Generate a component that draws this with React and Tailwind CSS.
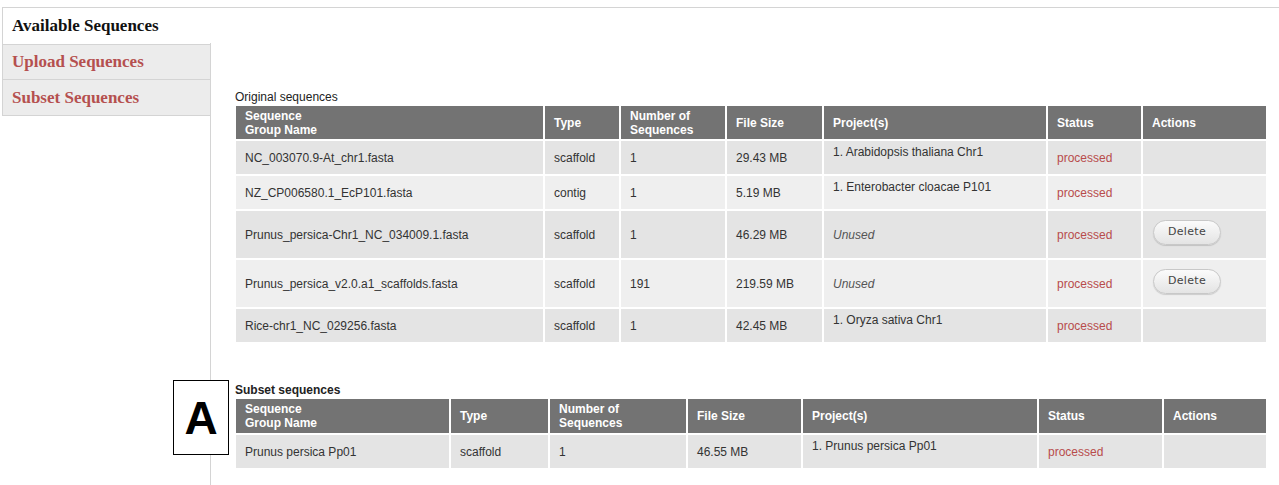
import React from "react";

const font = { fontFamily: '"Liberation Sans", Arial, sans-serif' };

function Th({ children }) {
  return (
    <th className="border-2 border-white bg-[#737373] text-white text-left font-bold text-[12px] leading-[14px] px-[9px] py-0 align-middle">
      {children}
    </th>
  );
}

function Td({ children, className = "" }) {
  return (
    <td className={"border-2 border-white px-[9px] py-0 text-[12px] leading-[14px] text-[#333] " + className}>
      {children}
    </td>
  );
}

function DeleteBtn() {
  return (
    <button className="mt-[-16px] h-[25px] w-[68px] rounded-full border border-[#c8c8c8] bg-gradient-to-b from-[#fbfbfb] to-[#e4e4e4] text-[11px] text-[#444] shadow-[0_1px_1px_rgba(0,0,0,0.15)]" style={{ fontFamily: '"DejaVu Sans", Verdana, sans-serif', letterSpacing: "0.3px" }}>
      Delete
    </button>
  );
}

const rows1 = [
  { name: "NC_003070.9-At_chr1.fasta", type: "scaffold", n: "1", size: "29.43 MB", proj: "1. Arabidopsis thaliana Chr1", h: "h-[35px]", bg: "bg-[#e4e4e4]" },
  { name: "NZ_CP006580.1_EcP101.fasta", type: "contig", n: "1", size: "5.19 MB", proj: "1. Enterobacter cloacae P101", h: "h-[35px]", bg: "bg-[#efefef]" },
  { name: "Prunus_persica-Chr1_NC_034009.1.fasta", type: "scaffold", n: "1", size: "46.29 MB", proj: null, del: true, h: "h-[49px]", bg: "bg-[#e4e4e4]" },
  { name: "Prunus_persica_v2.0.a1_scaffolds.fasta", type: "scaffold", n: "191", size: "219.59 MB", proj: null, del: true, h: "h-[49px]", bg: "bg-[#efefef]" },
  { name: "Rice-chr1_NC_029256.fasta", type: "scaffold", n: "1", size: "42.45 MB", proj: "1. Oryza sativa Chr1", h: "h-[35px]", bg: "bg-[#e4e4e4]" },
];

function Row({ r }) {
  return (
    <tr className={r.h + " " + r.bg}>
      <Td>{r.name}</Td>
      <Td>{r.type}</Td>
      <Td>{r.n}</Td>
      <Td>{r.size}</Td>
      <Td>
        {r.proj ? (
          <div className="pb-[12px]">{r.proj}</div>
        ) : (
          <span className="italic text-[#555]">Unused</span>
        )}
      </Td>
      <Td className="text-[#b84c4c]">processed</Td>
      <Td className="px-[10px]">{r.del ? <DeleteBtn /> : null}</Td>
    </tr>
  );
}

export default function App() {
  return (
    <div className="relative w-[1279px] h-[485px] overflow-hidden bg-white" style={font}>
      <div className="mt-[7px] ml-[2px] border-t border-[#d4d4d4] flex h-[478px]">
        <div className="w-[208px] shrink-0 flex flex-col" style={{ fontFamily: '"Liberation Serif", Georgia, serif' }}>
          <div className="h-[36px] border-l border-[#d4d4d4] flex items-center pl-[9px] text-[17px] font-bold text-[#111]">
            Available Sequences
          </div>
          <div className="h-[36px] border border-r-0 border-[#d4d4d4] bg-[#ececec] flex items-center pl-[9px] text-[17px] font-bold text-[#b5504f]">
            Upload Sequences
          </div>
          <div className="h-[36px] border border-t-0 border-r-0 border-[#d4d4d4] bg-[#ececec] flex items-center pl-[9px] text-[17px] font-bold text-[#b5504f]">
            Subset Sequences
          </div>
        </div>
        <div className="flex-1 mt-[35px] border-l border-[#d4d4d4] pl-[24px] pr-[12px] pt-[47px]">
          <div className="text-[12px] leading-[14px] text-[#222]">Original sequences</div>
          <table className="table-fixed border-collapse w-[1032px] ml-[-1px]">
            <colgroup>
              <col className="w-[309px]" />
              <col className="w-[76px]" />
              <col className="w-[106px]" />
              <col className="w-[97px]" />
              <col className="w-[224px]" />
              <col className="w-[95px]" />
              <col className="w-[125px]" />
            </colgroup>
            <thead>
              <tr className="h-[35px]">
                <Th>Sequence<br />Group Name</Th>
                <Th>Type</Th>
                <Th>Number of<br />Sequences</Th>
                <Th>File Size</Th>
                <Th>Project(s)</Th>
                <Th>Status</Th>
                <Th>Actions</Th>
              </tr>
            </thead>
            <tbody>
              {rows1.map((r) => (
                <Row key={r.name} r={r} />
              ))}
            </tbody>
          </table>

          <div className="mt-[39px] text-[12px] leading-[14px] font-bold text-[#222]">Subset sequences</div>
          <table className="table-fixed border-collapse w-[1032px] ml-[-1px]">
            <colgroup>
              <col className="w-[215px]" />
              <col className="w-[99px]" />
              <col className="w-[138px]" />
              <col className="w-[115px]" />
              <col className="w-[236px]" />
              <col className="w-[125px]" />
              <col className="w-[104px]" />
            </colgroup>
            <thead>
              <tr className="h-[36px]">
                <Th>Sequence<br />Group Name</Th>
                <Th>Type</Th>
                <Th>Number of<br />Sequences</Th>
                <Th>File Size</Th>
                <Th>Project(s)</Th>
                <Th>Status</Th>
                <Th>Actions</Th>
              </tr>
            </thead>
            <tbody>
              <Row r={{ name: "Prunus persica Pp01", type: "scaffold", n: "1", size: "46.55 MB", proj: "1. Prunus persica Pp01", h: "h-[35px]", bg: "bg-[#e4e4e4]" }} />
            </tbody>
          </table>
        </div>
      </div>
      <div className="absolute left-[173px] top-[380px] w-[56px] h-[75px] border border-black bg-white flex items-center justify-center text-[46px] font-bold text-black leading-none" style={{ fontFamily: '"Liberation Sans", Arial, sans-serif' }}>
        A
      </div>
    </div>
  );
}
